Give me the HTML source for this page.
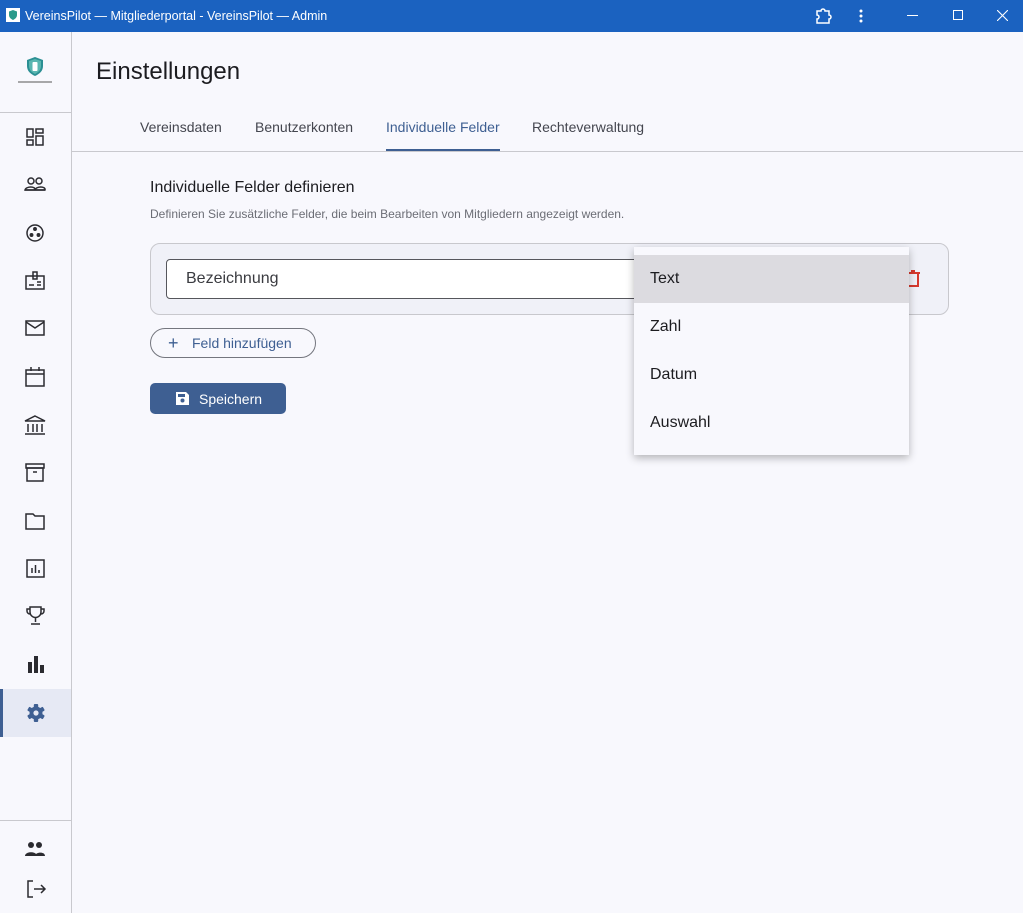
<!DOCTYPE html>
<html><head><meta charset="utf-8"><style>
*{box-sizing:border-box;margin:0;padding:0}
body{width:1023px;height:913px;overflow:hidden;background:#f8f8fd;font-family:"Liberation Sans",sans-serif;position:relative;color:#1c1c20}
.tb{position:absolute;left:0;top:0;width:1023px;height:32px;background:#1b62c0;color:#fff;font-size:12.5px}
.side{position:absolute;left:0;top:32px;width:72px;height:881px;border-right:1px solid #c9c9ce;background:#f8f8fd}
.abs{position:absolute}
.tab{position:absolute;top:119px;font-size:14px;color:#44464f}
.mi{position:absolute;left:650px;font-size:16px;color:#1c1c20}
</style></head><body>
<div class="tb">
<svg class="abs" style="left:6px;top:8px" width="14" height="14"><rect x="0" y="0" width="14" height="14" fill="#fff"/><path d="M7 2l4 1.5v3.5c0 2.5-2 4-4 5-2-1-4-2.5-4-5V3.5z" fill="#2a9a8a"/></svg>
<span class="abs" style="left:25px;top:9px">VereinsPilot — Mitgliederportal - VereinsPilot — Admin</span>
<svg class="abs" style="left:814px;top:7px" width="18" height="18" fill="none" stroke="#fff" stroke-width="1.5"><path d="M3 4h4a2 2 0 0 1 4 0h4v4a2 2 0 0 1 0 4v4H3v-4a2 2 0 0 0 0-4z"/></svg>
<svg class="abs" style="left:858px;top:8px" width="6" height="16" fill="#fff"><circle cx="3" cy="3" r="1.5"/><circle cx="3" cy="8" r="1.5"/><circle cx="3" cy="13" r="1.5"/></svg>
<div class="abs" style="left:907px;top:15px;width:11px;height:1px;background:#fff"></div>
<div class="abs" style="left:953px;top:10px;width:10px;height:10px;border:1px solid #fff"></div>
<svg class="abs" style="left:997px;top:10px" width="11" height="11" stroke="#fff" stroke-width="1.1"><path d="M0 0l11 11M11 0L0 11"/></svg>
</div>
<div class="side">
<svg class="abs" style="left:24px;top:24px" width="22" height="22"><path d="M11 1l8 3v6c0 5-3.5 8-8 10-4.5-2-8-5-8-10V4z" fill="#2b8f93"/><path d="M11 3l6 2v5c0 4-3 6.5-6 8-3-1.5-6-4-6-8V5z" fill="#5bb6b0"/><rect x="8.5" y="6" width="5" height="9" rx="1" fill="#fff"/></svg>
<div class="abs" style="left:18px;top:49px;width:34px;height:2px;background:#555;opacity:.5"></div>
<div class="abs" style="left:0;top:80px;width:71px;height:1px;background:#c9c9ce"></div>
<div class="abs" style="left:0;top:788px;width:71px;height:1px;background:#c9c9ce"></div>
<div class="abs" style="left:0;top:657px;width:71px;height:48px;background:#e6e9f4"></div>
<div class="abs" style="left:0;top:657px;width:3px;height:48px;background:#3e5f92"></div>
</div>
<svg class="abs" style="left:0;top:0" width="72" height="913" fill="none" stroke="#2b2b30" stroke-width="1.5">
<g transform="translate(27,129)"><rect x="0" y="0" width="6" height="8"/><rect x="9" y="0" width="7" height="4"/><rect x="0" y="11" width="6" height="5"/><rect x="9" y="7" width="7" height="9"/></g>
<g transform="translate(25,177)"><circle cx="6" cy="4" r="3"/><circle cx="14" cy="4" r="3"/><path d="M0 13c1-4 11-4 10 0zM10 13c1-4 11-4 10 0z" /><path d="M0 13h20"/></g>
<g transform="translate(26,224)"><circle cx="9" cy="9" r="8"/><circle cx="9" cy="5" r="1.2" fill="#2b2b30"/><circle cx="5.5" cy="11" r="1.2" fill="#2b2b30"/><circle cx="12.5" cy="11" r="1.2" fill="#2b2b30"/></g>
<g transform="translate(26,272)"><rect x="0" y="4" width="18" height="13"/><rect x="7" y="0" width="4" height="7"/><path d="M3 13h5M11 10h4M11 13h4"/></g>
<g transform="translate(26,321)"><rect x="0" y="0" width="18" height="14"/><path d="M0 1l9 6 9-6"/></g>
<g transform="translate(26,367)"><rect x="0" y="3" width="18" height="16"/><path d="M0 7h18M5 0v4M13 0v4"/></g>
<g transform="translate(25,416)"><path d="M10 0l10 5H0z M3 8v8M8 8v8M12 8v8M17 8v8M0 18h20"/></g>
<g transform="translate(26,464)"><rect x="0" y="0" width="18" height="4"/><rect x="1" y="4" width="16" height="13"/><path d="M7 8h4"/></g>
<g transform="translate(26,513)"><path d="M0 1h7l2 2h9v13H0z"/></g>
<g transform="translate(27,560)"><rect x="0" y="0" width="17" height="17"/><path d="M5 13V8M8.5 13V5M12 13v-3"/></g>
<g transform="translate(27,607)"><path d="M3 0h11v5a5.5 5.5 0 0 1-11 0zM3 2H0v2a3 3 0 0 0 3 3M14 2h3v2a3 3 0 0 1-3 3M8.5 10v5M4 17h9"/></g>
<g transform="translate(28,656)" fill="#2b2b30" stroke="none"><rect x="0" y="6" width="4" height="11"/><rect x="6" y="0" width="4" height="17"/><rect x="12" y="9" width="4" height="8"/></g>
<g transform="translate(36,713)" fill="#3e5f92" stroke="none">
<rect x="-2.2" y="-9" width="4.4" height="18" rx="1"/>
<rect x="-2.2" y="-9" width="4.4" height="18" rx="1" transform="rotate(60)"/>
<rect x="-2.2" y="-9" width="4.4" height="18" rx="1" transform="rotate(120)"/>
<circle r="6.5"/><circle r="2.6" fill="#e6e9f4"/></g>
<g transform="translate(25,841)" fill="#2b2b30" stroke="none"><circle cx="6" cy="4" r="3"/><circle cx="14" cy="4" r="3"/><path d="M0 15c0-5 12-5 12 0zM10 15c0-4 10-5 10 0z"/></g>
<g transform="translate(27,880)"><path d="M6 1H1v16h5M7 9h11M14 5l4 4-4 4"/></g>
</svg>
<div class="abs" style="left:96px;top:58px;font-size:24px;color:#1c1c20">Einstellungen</div>
<div class="tab" style="left:140px">Vereinsdaten</div>
<div class="tab" style="left:255px">Benutzerkonten</div>
<div class="tab" style="left:386px;color:#3e5f92">Individuelle Felder</div>
<div class="tab" style="left:532px">Rechteverwaltung</div>
<div class="abs" style="left:386px;top:149px;width:114px;height:2px;background:#3e5f92"></div>
<div class="abs" style="left:72px;top:151px;width:951px;height:1px;background:#c9c9ce"></div>
<div class="abs" style="left:150px;top:179px;font-size:16px;color:#1c1c20">Individuelle Felder definieren</div>
<div class="abs" style="left:150px;top:207px;font-size:12px;color:#6b6d75">Definieren Sie zusätzliche Felder, die beim Bearbeiten von Mitgliedern angezeigt werden.</div>
<div class="abs" style="left:150px;top:243px;width:799px;height:72px;border:1px solid #c8c8cd;border-radius:10px;background:#f0f1f8"></div>
<div class="abs" style="left:166px;top:259px;width:500px;height:40px;border:1px solid #55565c;border-radius:4px;background:#fff"></div>
<div class="abs" style="left:186px;top:270px;font-size:16px;color:#3a3b40">Bezeichnung</div>
<svg class="abs" style="left:906px;top:270px" width="14" height="18" fill="none" stroke="#d63a2f" stroke-width="2"><path d="M0 3h14M5 1h4M2 3v13h10V3"/></svg>
<div class="abs" style="left:150px;top:328px;width:166px;height:30px;border:1px solid #74767e;border-radius:15px"></div>
<div class="abs" style="left:168px;top:333px;font-size:18px;color:#3e5f92">+</div>
<div class="abs" style="left:192px;top:335px;font-size:14px;color:#3e5f92">Feld hinzufügen</div>
<div class="abs" style="left:150px;top:383px;width:136px;height:31px;border-radius:5px;background:#3e5f92"></div>
<svg class="abs" style="left:175px;top:391px" width="15" height="15"><path d="M1 1h10l3 3v10H1z" fill="#fff"/><circle cx="7.5" cy="9.5" r="2" fill="#3e5f92"/><rect x="3" y="3" width="7" height="3" fill="#3e5f92"/></svg>
<div class="abs" style="left:199px;top:391px;font-size:14px;color:#fff">Speichern</div>
<div class="abs" style="left:634px;top:247px;width:275px;height:208px;background:#f8f8fd;box-shadow:0 3px 8px rgba(0,0,0,.28)"></div>
<div class="abs" style="left:634px;top:255px;width:275px;height:48px;background:#dcdbe0"></div>
<div class="mi" style="top:270px">Text</div>
<div class="mi" style="top:318px">Zahl</div>
<div class="mi" style="top:366px">Datum</div>
<div class="mi" style="top:414px">Auswahl</div>
</body></html>
